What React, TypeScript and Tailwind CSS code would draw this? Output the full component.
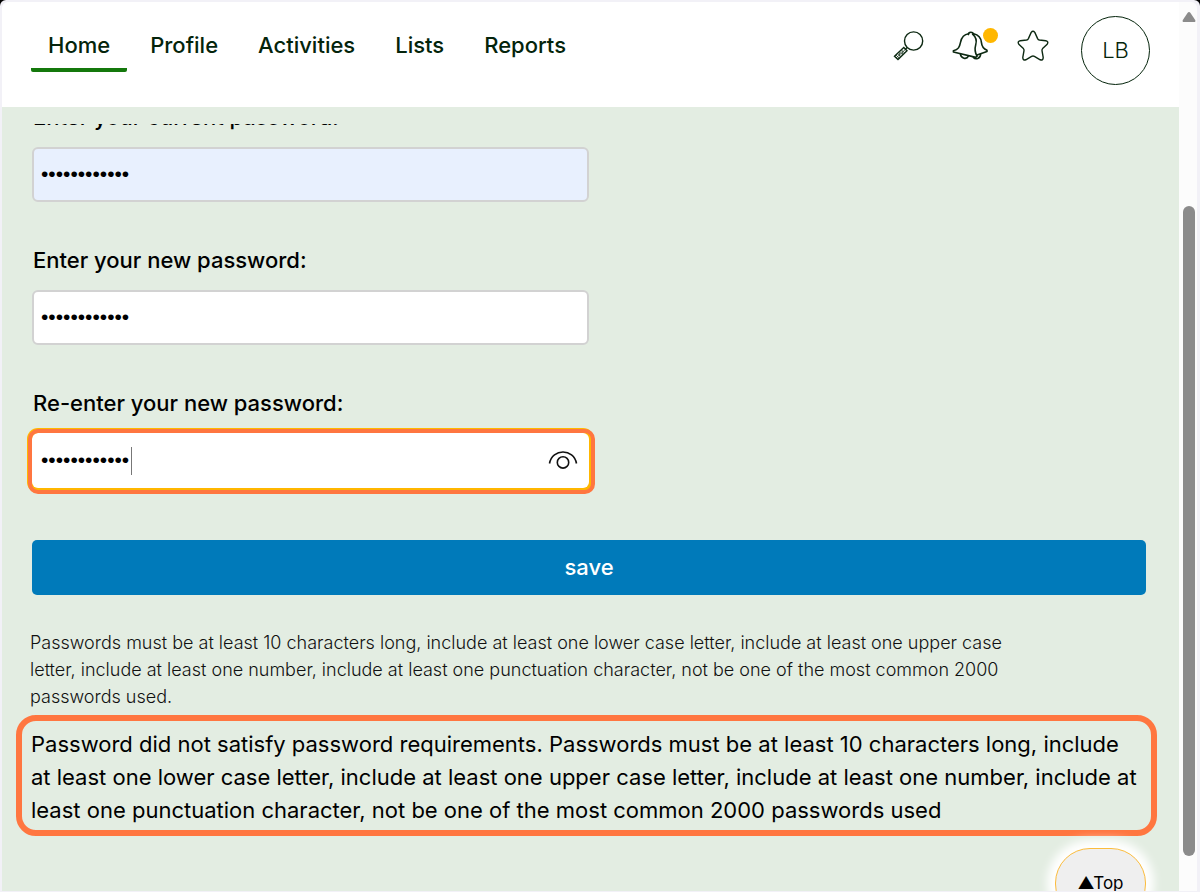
import React, { useState } from "react";

const navItems = ["Home", "Profile", "Activities", "Lists", "Reports"];

function SearchIcon() {
  return (
    <svg width="32" height="32" viewBox="0 0 32 32" fill="none" stroke="#0d2912" strokeWidth="1.4" aria-hidden="true">
      <circle cx="20.6" cy="11" r="9.1" />
      <path d="M14.2 17.4 12 19.8" />
      <path d="M10.8 17.5 14 20.7 5 29.6 1.5 26.2Z" />
      <path d="M8.6 20 11.6 23M6.5 21.8 9.6 24.9M4.4 23.5 7.5 26.7M3 25l3.4 3.4M12 19.8 3 28M9 20.8l.6 3.4M6.4 22.8l.6 3.8" strokeWidth="0.7" />
    </svg>
  );
}

function BellIcon() {
  return (
    <svg width="36" height="32" viewBox="0 0 36 32" fill="none" stroke="#0d2912" strokeWidth="1.6" strokeLinejoin="round" strokeLinecap="round" aria-hidden="true">
      <path d="M16.6 3.8C11.6 4.4 9.4 8 8.5 12.4 7.6 17 6.4 19.6 1.4 20.8V22L23.8 27.4 25 26" />
      <path d="M16.4 4.6C16.400 1.400 21.200 1.400 21.600 4.600" />
      <path d="M21.6 3.8C26.600 5 29 8 29.400 12.400 29.800 16.600 31 18.800 35 20.200V21.400L25 25" />
      <path d="M20.6 4.2C24 7.200 25 10.200 23.800 14.400 22.600 18.800 22.600 22.200 25 26" />
      <path d="M8.400 24.200C9 28.600 14.600 29.800 16.400 26.200M21.400 27.400C23.400 29.800 28.600 29 28.600 24" />
    </svg>
  );
}

function StarIcon() {
  return (
    <svg width="32" height="32" viewBox="0 0 32 32" fill="none" stroke="#0d2912" strokeWidth="1.4" strokeLinejoin="round" aria-hidden="true">
      <path d="M14.2 2.4Q16 .2 17.8 2.4L20.6 8.6Q21.2 9.8 22.4 10L28.8 10.8Q32 11.6 30.2 14.2L25.6 18.6Q24.800 19.500 25 20.600L26.200 27.400Q26.200 30.600 23.200 29.800L17.400 26.400Q16 25.700 14.600 26.400L8.800 29.800Q5.800 30.600 5.800 27.400L7 20.600Q7.200 19.500 6.400 18.600L1.800 14.200Q0 11.600 3.200 10.800L9.600 10Q10.800 9.800 11.400 8.600Z" />
    </svg>
  );
}

function EyeIcon() {
  return (
    <svg width="30" height="20" viewBox="0 0 30 20" fill="none" stroke="#111" strokeWidth="1.6" aria-hidden="true">
      <path d="M1.5 13.5C4.2 -1.8 25.8 -1.8 28.5 13.5" />
      <circle cx="15" cy="12.4" r="5.7" />
    </svg>
  );
}

type FieldProps = {
  id: string;
  label: string;
  filled?: boolean;
  active?: boolean;
};

function PasswordField({ id, label, filled, active }: FieldProps) {
  const [value, setValue] = useState("Password1234");
  const [shown, setShown] = useState(false);
  return (
    <div className="flex flex-col gap-[14px]">
      <label htmlFor={id} className="pl-px text-[22px] leading-8 font-medium text-black">
        {label}
      </label>
      <div className="relative w-1/2">
        <input
          id={id}
          type={shown ? "text" : "password"}
          value={value}
          onChange={(e) => setValue(e.target.value)}
          className={
            "block h-[55px] w-full rounded-md pb-[2px] font-['Liberation_Sans',sans-serif] text-[21px] text-black outline-none " +
            (active
              ? "bg-white px-[9px] shadow-[0_0_0_5px_#ffb700]"
              : filled
                ? "border-2 border-[#d2d2d2] bg-[#e8f0fe] px-[7px]"
                : "border-2 border-[#d2d2d2] bg-white px-[7px]")
          }
        />
        {active && (
          <>
            <span className="pointer-events-none absolute -top-1 -right-[6px] -bottom-[6px] -left-1 rounded-[10px] border-4 border-[#ff7640]" />
            <span className="pointer-events-none absolute top-[14px] left-[99px] h-7 w-px bg-[#777]" />
            <button
              type="button"
              aria-label="Show password"
              onClick={() => setShown(!shown)}
              className="absolute top-[17px] right-[11px]"
            >
              <EyeIcon />
            </button>
          </>
        )}
      </div>
    </div>
  );
}

export default function App() {
  return (
    <div className="h-screen bg-black font-['Inter',sans-serif]">
      <div className="flex h-full rounded-t-md bg-[#f2f1f7] pt-[2px] pr-[3px] pb-px pl-[2px]">
        <div className="flex min-w-0 flex-1 flex-col">
          <header className="flex h-[105px] shrink-0 items-start justify-between rounded-tl-md bg-white pr-[29px] pl-[29px]">
            <nav className="flex gap-[6px] pt-[27px]">
              {navItems.map((item) => (
                <a
                  key={item}
                  href="#"
                  className={
                    "rounded-b-xs border-b-4 px-[17px] pb-[7px] text-[22px] leading-8 font-medium text-[#04240b] " +
                    (item === "Home" ? "border-[#14780c]" : "border-transparent")
                  }
                >
                  {item}
                </a>
              ))}
            </nav>
            <div className="flex items-center pt-[14px]">
              <button type="button" aria-label="Search" className="mr-[27px] mb-[10px]">
                <SearchIcon />
              </button>
              <button type="button" aria-label="Notifications" className="relative mr-[29px] mb-[10px]">
                <BellIcon />
                <span className="absolute -top-[2px] -right-[10px] size-[15px] rounded-full bg-[#ffb700]" />
              </button>
              <button type="button" aria-label="Favourites" className="mr-8 mb-[10px]">
                <StarIcon />
              </button>
              <button
                type="button"
                className="flex size-[69px] items-center justify-center rounded-full border border-[#04240b] text-[22px] font-light text-[#04240b]"
              >
                LB
              </button>
            </div>
          </header>
          <main className="relative min-h-0 flex-1 overflow-hidden bg-[#e3ede2] pt-[17px]">
            <div className="h-full overflow-hidden">
              <form className="-mt-[23px] flex flex-col pr-[33px] pl-[30px]" onSubmit={(e) => e.preventDefault()}>
                <div className="flex flex-col gap-[42px]">
                  <PasswordField id="current" label="Enter your current password:" filled />
                  <PasswordField id="new" label="Enter your new password:" />
                  <PasswordField id="repeat" label="Re-enter your new password:" active />
                </div>
                <button
                  type="submit"
                  className="mt-[52px] h-[55px] rounded-[5px] bg-[#007aba] text-[22px] font-medium text-white"
                >
                  save
                </button>
              </form>
              <p className="mt-[34px] mr-[150px] ml-7 text-[18px] leading-[27px] font-light text-[#111]">
                Passwords must be at least 10 characters long, include at least one lower case letter, include at
                least one upper case letter, include at least one number, include at least one punctuation
                character, not be one of the most common 2000 passwords used.
              </p>
              <p
                role="alert"
                className="mt-[5px] mr-[22px] ml-[14px] rounded-[20px] border-[6px] border-[#ff7640] pt-[7px] pr-[10px] pb-[3px] pl-[9px] text-[22px] leading-[33px] text-black"
              >
                Password did not satisfy password requirements. Passwords must be at least 10 characters long,
                include at least one lower case letter, include at least one upper case letter, include at least
                one number, include at least one punctuation character, not be one of the most common 2000
                passwords used
              </p>
            </div>
            <button
              type="button"
              className="absolute right-[33px] -bottom-7 h-[71px] w-[91px] rounded-[35px] border border-[#fbbc3c] bg-[#efefef] text-[17px] text-black shadow-[0_0_10px_8px_#fff]"
            >
              ▲Top
            </button>
          </main>
        </div>
        <div className="flex w-[18px] shrink-0 flex-col items-center rounded-tr-md bg-[#fcfcfc] pt-[10px] pl-px">
          <svg width="14" height="10" viewBox="0 0 14 10" fill="#8b8b8b" aria-hidden="true">
            <path d="M7 0Q7.800 0 8.500 1L13.200 8Q14 10 12 10H2Q0 10 .8 8L5.500 1Q6.200 0 7 0Z" />
          </svg>
          <div className="flex-[184]" />
          <div className="w-3 flex-[650] rounded-full bg-[#8b8b8b]" />
          <div className="flex-[35]" />
        </div>
      </div>
    </div>
  );
}
